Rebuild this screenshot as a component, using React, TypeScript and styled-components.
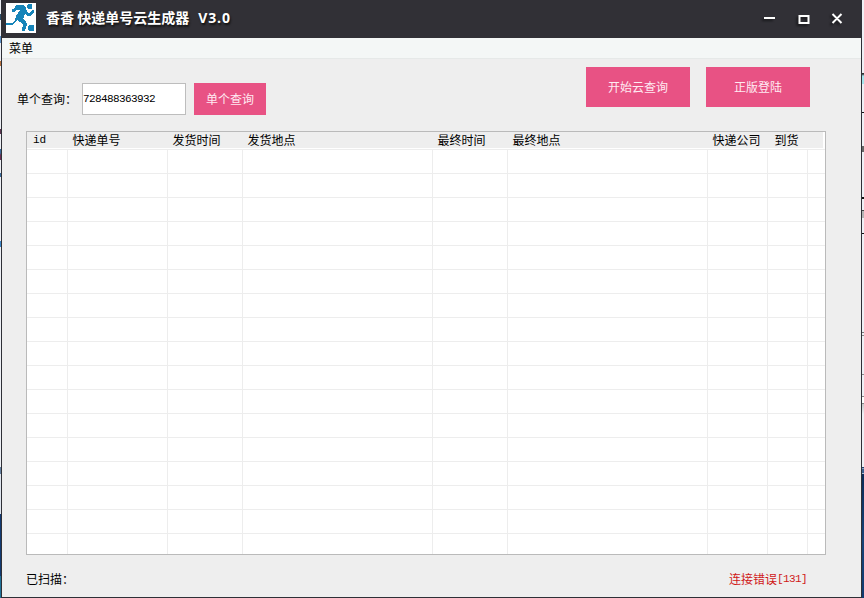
import React from 'react';
import styled, { createGlobalStyle } from 'styled-components';

const GlobalStyle = createGlobalStyle`
  * { box-sizing: border-box; }
  body { margin: 0; overflow: hidden; background: #eef0f5; }
`;

const cjk = `"Noto Sans CJK SC", sans-serif`;

const Desktop = styled.div`
  display: flex;
  width: 864px;
  height: 598px;
  font: 12px/16px ${cjk};
  color: #000;
`;

const LeftEdge = styled.div`
  width: 1px;
  background: linear-gradient(
    #eef0f5 0 14px, #2b4d66 14px 20px, #eef0f5 20px 36px, #5a8fc4 36px 43px,
    #eef0f5 43px 61px, #b5713f 61px 66px, #eef0f5 66px 129px, #5d3550 129px 134px,
    #eef0f5 134px 149px, #3b6c9b 149px 153px, #6a2f55 155px 160px,
    #eef0f5 160px 173px, #3b6c9b 173px 177px, #eef0f5 177px 241px,
    #3e87c8 241px 247px, #eef0f5 247px 467px, #64809f 467px 474px,
    #dfe5ee 474px 514px, #123a72 514px 576px, #1f7198 576px
  );
`;

const RightEdge = styled.div`
  width: 2px;
  background: linear-gradient(
    #eef0f5 0 73px, #333 73px 74px, #a5e4ec 76px 84px, #eef0f5 84px 112px,
    #111 112px 113px, #eef0f5 113px 146px, #666 146px 152px, #eef0f5 152px 197px,
    #111 197px 199px, #eef0f5 199px 210px, #444 210px 211px, #b5b5b5 211px 218px,
    #eef0f5 218px 233px, #111 233px 234px, #eef0f5 234px 332px, #777 332px 333px,
    #eef0f5 333px 335px, #888 335px 336px, #eef0f5 336px 374px, #888 374px 375px,
    #eef0f5 375px 396px, #888 396px 397px, #fff 397px 403px, #888 403px 404px,
    #c8c8c8 404px, #eef0f5 414px 467px, #23406d 467px 468px, #8ba0be 468px 469px,
    #3b5f8f 469px 473px, #b1c0d5 473px 474px, #0b2b58 474px, #174378 540px, #113a70
  );
`;

const Window = styled.main`
  width: 861px;
  display: flex;
  flex-direction: column;
  background: #eee;
  border: 1px solid #2e2f36;
  border-top: 0;
`;

const TitleBar = styled.header`
  height: 38px;
  flex: none;
  display: flex;
  align-items: flex-start;
  padding: 3px 17px 0 4px;
  background: #313036;
  color: #fff;
`;

const AppIcon = styled.svg`
  width: 30px;
  height: 30px;
  background: #fff;
`;

const Title = styled.h1`
  flex: 1;
  margin: 4px 0 0 10px;
  font: bold 14px/20px ${cjk};
  white-space: pre;
  text-shadow: 1px 2px 2px #111;
`;

const Version = styled.span`
  margin-left: 9px;
  font-family: "Open Sans", sans-serif;
  letter-spacing: 0.9px;
`;

const Controls = styled.svg`
  width: 84px;
  height: 24px;
  margin-top: 4px;
  filter: drop-shadow(-2px 2px 1px #18181c);
`;

const MenuBar = styled.nav`
  height: 21px;
  flex: none;
  padding: 2px 7px 0;
  background: #f4f7f6;
  border-bottom: 1px solid #e6e9e8;
`;

const Toolbar = styled.section`
  height: 72px;
  flex: none;
  display: flex;
  align-items: flex-start;
  padding: 8px 51px 0 15px;
`;

const FieldLabel = styled.label`
  width: 65px;
  margin-top: 24px;
`;

const NumberInput = styled.input`
  width: 104px;
  height: 32px;
  margin: 16px 8px 0 0;
  padding: 0;
  border: 1px solid #bdbdbd;
  border-radius: 0;
  background: #fff;
  color: #000;
  font: 11px "Liberation Mono", monospace;
  letter-spacing: -0.6px;
  outline: 0;
`;

const Button = styled.button<{ $large?: boolean }>`
  width: ${p => (p.$large ? 104 : 72)}px;
  height: ${p => (p.$large ? 40 : 32)}px;
  margin-top: ${p => (p.$large ? 0 : 16)}px;
  padding: 0;
  border: 0;
  background: #e85284;
  color: #ffeaf2;
  font: 12px/16px ${cjk};
`;

const Actions = styled.div`
  display: flex;
  gap: 16px;
  margin-left: auto;
`;

const columns = '41px 100px 75px 190px 75px 200px 60px 40px 1fr';

const Table = styled.section`
  width: 800px;
  height: 424px;
  flex: none;
  margin-left: 24px;
  border: 1px solid #bababa;
  background: #fff;
  overflow: hidden;
`;

const HeaderRow = styled.div`
  display: grid;
  grid-template-columns: ${columns};
  width: 796px;
  height: 16px;
  margin-bottom: 1px;
  background: #eee;
`;

const HeaderCell = styled.span<{ $latin?: boolean; $indent: number }>`
  padding-left: ${p => p.$indent}px;
  white-space: nowrap;
  font: ${p => (p.$latin ? '11px/17px "Liberation Mono", monospace' : `12px/16px ${cjk}`)};
`;

const Row = styled.div`
  display: grid;
  grid-template-columns: ${columns};
  height: 24px;
  border-top: 1px solid #ededed;
`;

const Cell = styled.span`
  border-right: 1px solid #ededed;
  &:last-child { border-right: 0; }
`;

const StatusBar = styled.footer`
  display: flex;
  justify-content: space-between;
  padding: 16px 54px 0 24px;
`;

const ErrorText = styled.span`
  display: flex;
  color: #d01818;
`;

const Mono = styled.span`
  font: 11px/16px "Liberation Mono", monospace;
  letter-spacing: -0.6px;
`;

const headers = [
  { name: 'id', indent: 6 },
  { name: '快递单号', indent: 4.5 },
  { name: '发货时间', indent: 4.5 },
  { name: '发货地点', indent: 4.5 },
  { name: '最终时间', indent: 4.5 },
  { name: '最终地点', indent: 4.5 },
  { name: '快递公司', indent: 4.5 },
  { name: '到货', indent: 6.5 },
  { name: '', indent: 0 },
];
const rows = Array.from({ length: 17 }, (_, i) => i);

export default function App() {
  return (
    <>
      <GlobalStyle />
      <Desktop>
        <LeftEdge />
        <Window>
          <TitleBar>
            <AppIcon viewBox="0 0 30 30" fill="#1684b9" shapeRendering="crispEdges">
              <path d="M22 1h3l1 1v3l-1 1h-3l-1-1V2z" />
              <path d="M10 2h7l3 3 1 4 2 1 4-3 1 1v1l-4 4h-3l-2-2-2 5 3 2 1 3-2 7h-3l1-7-6-4-2 3-3 2H0v-2h6l3-3 1-4 4-6h-4L8 9H6V6h2z" />
              <path d="M23 22h4l1 1v4l-1 1h-4l-1-1v-4z" />
            </AppIcon>
            <Title>香香 快递单号云生成器<Version>V3.0</Version></Title>
            <Controls viewBox="0 0 84 24" fill="none" stroke="#fff" strokeWidth="2">
              <path d="M4 11h11M39.500 9h9v7h-9zM38.500 9h11M72.500 7l9 9M81.500 7l-9 9" />
            </Controls>
          </TitleBar>
          <MenuBar>菜单</MenuBar>
          <Toolbar>
            <FieldLabel htmlFor="tracking">单个查询：</FieldLabel>
            <NumberInput id="tracking" defaultValue="728488363932" />
            <Button>单个查询</Button>
            <Actions>
              <Button $large>开始云查询</Button>
              <Button $large>正版登陆</Button>
            </Actions>
          </Toolbar>
          <Table>
            <HeaderRow>
              {headers.map(({ name, indent }, i) => (
                <HeaderCell key={i} $latin={i === 0} $indent={indent}>{name}</HeaderCell>
              ))}
            </HeaderRow>
            {rows.map(row => (
              <Row key={row}>
                {headers.map((_, i) => <Cell key={i} />)}
              </Row>
            ))}
          </Table>
          <StatusBar>
            <span>已扫描：</span>
            <ErrorText>连接错误<Mono>[131]</Mono></ErrorText>
          </StatusBar>
        </Window>
        <RightEdge />
      </Desktop>
    </>
  );
}
